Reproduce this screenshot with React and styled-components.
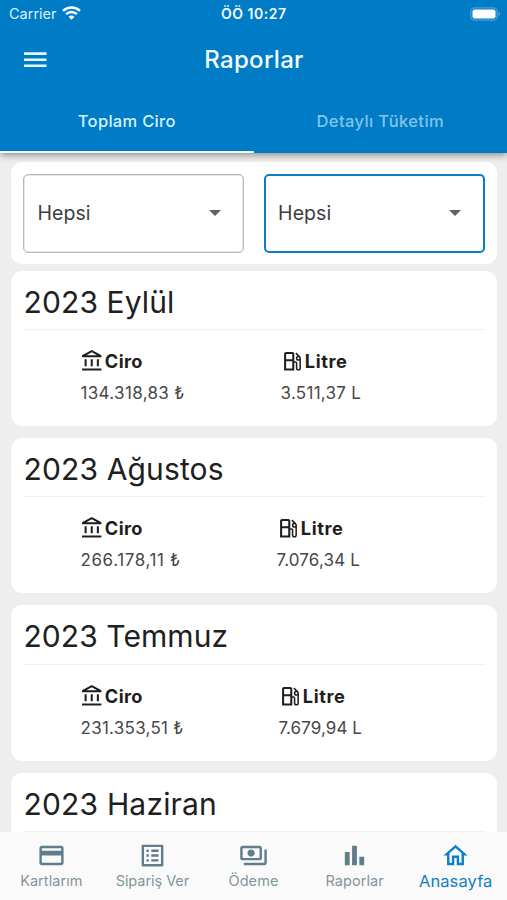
import React from "react";
import styled, { createGlobalStyle } from "styled-components";
import {
  MdOutlineAccountBalance,
  MdOutlineLocalGasStation,
  MdOutlineCreditCard,
  MdOutlineListAlt,
  MdOutlinePayments,
  MdOutlineHome,
} from "react-icons/md";

const Global = createGlobalStyle`
  * { box-sizing: border-box; }
  body { margin: 0; font-family: Inter, "Open Sans", sans-serif; background: #eeeeee; }
`;

const Screen = styled.div`
  width: 507px;
  height: 900px;
  display: flex;
  flex-direction: column;
  overflow: hidden;
  background: #eeeeee;
`;

const Header = styled.header`
  flex: none;
  height: 152.5px;
  display: flex;
  flex-direction: column;
  background: #007bc5;
  color: #f4fbff;
  z-index: 1;
  box-shadow: 0 2px 7px rgba(0, 0, 0, 0.42);
`;

const StatusBar = styled.div`
  height: 28px;
  padding: 0 6px 0 9px;
  display: grid;
  grid-template-columns: 1fr auto 1fr;
  align-items: center;
  font-size: 14.5px;
  line-height: 28px;
`;

const Carrier = styled.div`
  display: flex;
  align-items: center;
  gap: 5px;
  color: #d9f1ff;
  svg { margin-top: -2px; }
`;

const Clock = styled.div`
  font-weight: 600;
  font-size: 14px;
  letter-spacing: 0.5px;
  padding-right: 2.5px;
`;

const BatteryIcon = styled.svg`
  justify-self: end;
  margin-top: -1px;
`;

const AppBar = styled.div`
  height: 64px;
  padding: 0 20px;
  display: grid;
  grid-template-columns: 30px 1fr 30px;
  align-items: center;
`;

const Title = styled.h1`
  margin: 0;
  text-align: center;
  font-weight: 450;
  font-size: 24px;
  line-height: 64px;
  letter-spacing: 0.3px;
  padding-left: 1px;
`;

const Tabs = styled.div`
  flex: 1;
  display: flex;
`;

const Tab = styled.div`
  flex: 1;
  text-align: center;
  font-size: 16.5px;
  font-weight: 500;
  line-height: 59px;
  letter-spacing: ${(p) => p.$spacing}px;
  color: ${(p) => (p.$active ? "#d5f2ff" : "#80c4ec")};
  border-bottom: 2.5px solid ${(p) => (p.$active ? "#f2f8fc" : "transparent")};
`;

const Content = styled.main`
  flex: 1;
  min-height: 0;
  overflow: hidden;
  padding: 9.5px 10px 0 10.5px;
`;

const Panel = styled.section`
  background: #fff;
  border-radius: 11px;
`;

const Filters = styled(Panel)`
  height: 102.4px;
  padding: 12px 12px 0;
  display: grid;
  grid-template-columns: 1fr 1fr;
  gap: 19.5px;
`;

const Select = styled.div`
  height: 79px;
  padding: 0 22.5px 2px ${(p) => (p.$focused ? 12.6 : 14)}px;
  display: flex;
  align-items: center;
  justify-content: space-between;
  border-radius: 5px;
  border: ${(p) => (p.$focused ? "2.4px solid #0b7dc3" : "1.5px solid #b9b9b9")};
  box-shadow: ${(p) => (p.$focused ? "none" : "inset 0 0 0 0.5px #cfcfcf")};
  color: #3d3d3d;
  font-size: 19.5px;
  letter-spacing: 0.05px;
`;

const ReportList = styled.div`
  padding-top: 6.2px;
  display: flex;
  flex-direction: column;
  gap: 11.9px;
`;

const Report = styled(Panel)`
  flex: none;
  height: 155.5px;
  padding: 0 12.5px 0 13px;
`;

const Month = styled.h2`
  margin: 0;
  height: 59.5px;
  border-bottom: 1px solid #f0f0f0;
  font-weight: 400;
  font-size: 30px;
  line-height: 62px;
  letter-spacing: ${(p) => p.$spacing}px;
  color: #202020;
`;

const Metrics = styled.div`
  display: grid;
  grid-template-columns: ${(p) => p.$split}px 1fr;
  padding: 18px 0 0 57px;
`;

const Metric = styled.div`
  display: flex;
  flex-direction: column;
`;

const MetricLabel = styled.div`
  display: flex;
  align-items: center;
  height: 26px;
  font-size: 18.2px;
  font-weight: 650;
  letter-spacing: ${(p) => p.$spacing}px;
  color: #1e1e1e;
  svg { flex: none; margin: 0 0.3px 0 -0.5px; }
`;

const MetricValue = styled.div`
  line-height: 20px;
  padding-top: 9px;
  font-size: 17px;
  letter-spacing: ${(p) => p.$spacing}px;
  color: #484848;
  white-space: nowrap;
`;

const NavBar = styled.nav`
  flex: none;
  height: 68px;
  display: grid;
  grid-template-columns: repeat(5, 101.1px);
  justify-content: center;
  background: #fafafa;
`;

const NavItem = styled.div`
  display: flex;
  flex-direction: column;
  align-items: center;
  padding-top: 9px;
  color: ${(p) => (p.$active ? "#117fc5" : "#607d8b")};
`;

const NavLabel = styled.span`
  font-size: ${(p) => (p.$active ? 16.5 : 14.5)}px;
  line-height: 22px;
  letter-spacing: ${(p) => p.$spacing}px;
  color: ${(p) => (p.$active ? "#117fc5" : "#82959e")};
  white-space: nowrap;
`;

const WifiIcon = () => (
  <svg width="19" height="14" viewBox="0 0 19 14" fill="none" stroke="#fff" strokeWidth="2.4">
    <path d="M1 4.9C5.8.4 13.2.4 18 4.9" />
    <path d="M4.1 8.2c3-2.900 7.800-2.900 10.800 0" />
    <path d="M9.500 13.700 6.500 10.700c1.700-1.600 4.300-1.600 6 0z" fill="#fff" stroke="none" />
  </svg>
);

const Battery = () => (
  <BatteryIcon width="31" height="14" viewBox="0 0 31 14">
    <rect x=".8" y=".8" width="26.400" height="12.400" rx="3.800" fill="none" stroke="#4aa3d9" strokeWidth="1.200" />
    <rect x="2.500" y="2.400" width="23" height="9.200" rx="2" fill="#fff" />
    <path d="M28.600 5v4c1-.3 1.500-1.100 1.500-2s-.5-1.700-1.500-2z" fill="#4aa3d9" />
  </BatteryIcon>
);

const MenuIcon = () => (
  <svg width="30" height="30" viewBox="0 0 30 30" fill="#e6f7ff">
    <path d="M4 7.300h22.500v2.600H4zM4 13.400h22.500V16H4zM4 19.500h22.500v2.600H4z" />
  </svg>
);

const CaretIcon = () => (
  <svg width="12" height="6" viewBox="0 0 12 6" fill="#616161">
    <path d="M0 0h12L6 6z" />
  </svg>
);

const BarsIcon = ({ size }) => (
  <svg width={size} height={size} viewBox="0 0 24 24" fill="currentColor">
    <path d="M4 9h4v11H4zM16 13h4v7h-4zM10 4h4v16h-4z" />
  </svg>
);

const reports = [
  {
    month: "2023 Eylül", spacing: 0.12, split: 200,
    ciro: "134.318,83 ₺", ciroSpacing: 0.33,
    litre: "3.511,37 L", litreSpacing: 0.28,
  },
  {
    month: "2023 Ağustos", spacing: 0.14, split: 196,
    ciro: "266.178,11 ₺", ciroSpacing: 0.6,
    litre: "7.076,34 L", litreSpacing: 0.15,
  },
  {
    month: "2023 Temmuz", spacing: 0.07, split: 198,
    ciro: "231.353,51 ₺", ciroSpacing: 0.27,
    litre: "7.679,94 L", litreSpacing: 0.08,
  },
  { month: "2023 Haziran", spacing: 0.18 },
];

const navItems = [
  { label: "Kartlarım", Icon: MdOutlineCreditCard, spacing: 0.05 },
  { label: "Sipariş Ver", Icon: MdOutlineListAlt, spacing: -0.05 },
  { label: "Ödeme", Icon: MdOutlinePayments, spacing: 0.1 },
  { label: "Raporlar", Icon: BarsIcon, spacing: 0.05 },
  { label: "Anasayfa", Icon: MdOutlineHome, active: true, spacing: 0.1 },
];

export default function App() {
  return (
    <Screen>
      <Global />
      <Header>
        <StatusBar>
          <Carrier>
            Carrier
            <WifiIcon />
          </Carrier>
          <Clock>ÖÖ 10:27</Clock>
          <Battery />
        </StatusBar>
        <AppBar>
          <MenuIcon />
          <Title>Raporlar</Title>
        </AppBar>
        <Tabs>
          <Tab $active $spacing={0.3}>Toplam Ciro</Tab>
          <Tab $spacing={0.4}>Detaylı Tüketim</Tab>
        </Tabs>
      </Header>
      <Content>
        <Filters>
          <Select>
            Hepsi
            <CaretIcon />
          </Select>
          <Select $focused>
            Hepsi
            <CaretIcon />
          </Select>
        </Filters>
        <ReportList>
          {reports.map((r) => (
            <Report key={r.month}>
              <Month $spacing={r.spacing}>{r.month}</Month>
              {r.ciro && (
                <Metrics $split={r.split}>
                  <Metric>
                    <MetricLabel $spacing={0.4}>
                      <MdOutlineAccountBalance size={24.5} />
                      Ciro
                    </MetricLabel>
                    <MetricValue $spacing={r.ciroSpacing}>{r.ciro}</MetricValue>
                  </Metric>
                  <Metric>
                    <MetricLabel $spacing={0.6}>
                      <MdOutlineLocalGasStation size={24.5} />
                      Litre
                    </MetricLabel>
                    <MetricValue $spacing={r.litreSpacing}>{r.litre}</MetricValue>
                  </Metric>
                </Metrics>
              )}
            </Report>
          ))}
        </ReportList>
      </Content>
      <NavBar>
        {navItems.map(({ label, Icon, active, spacing }) => (
          <NavItem key={label} $active={active}>
            <Icon size={29} />
            <NavLabel $active={active} $spacing={spacing}>{label}</NavLabel>
          </NavItem>
        ))}
      </NavBar>
    </Screen>
  );
}
